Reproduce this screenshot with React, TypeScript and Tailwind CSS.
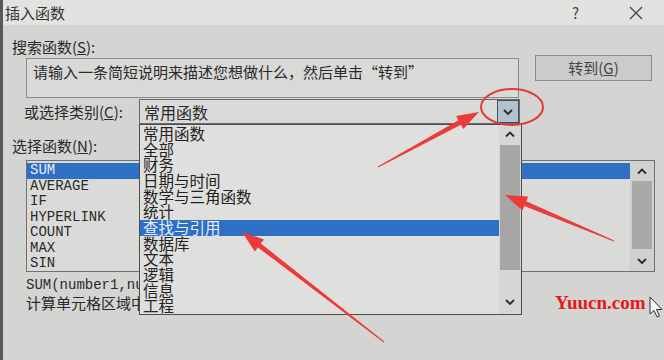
import React from "react";

const CJK = '"Noto Sans CJK SC", "Noto Sans", sans-serif';
const MONO = '"Liberation Mono", "Noto Sans CJK SC", monospace';

function arrowPoints(x1: number, y1: number, x2: number, y2: number, headL = 22, headW = 15, tailW = 1, neckW = 5) {
  const dx = x2 - x1, dy = y2 - y1;
  const len = Math.hypot(dx, dy);
  const ux = dx / len, uy = dy / len;
  const nx = -uy, ny = ux;
  const bx = x2 - ux * headL, by = y2 - uy * headL;
  const p = (x: number, y: number) => `${x.toFixed(1)},${y.toFixed(1)}`;
  return [
    p(x1 + nx * tailW / 2, y1 + ny * tailW / 2),
    p(bx + nx * neckW / 2, by + ny * neckW / 2),
    p(bx + nx * headW / 2, by + ny * headW / 2),
    p(x2, y2),
    p(bx - nx * headW / 2, by - ny * headW / 2),
    p(bx - nx * neckW / 2, by - ny * neckW / 2),
    p(x1 - nx * tailW / 2, y1 - ny * tailW / 2),
  ].join(" ");
}

const Chevron = ({ up = false, className = "" }: { up?: boolean; className?: string }) => (
  <svg width="12" height="8" viewBox="0 0 12 8" className={className}>
    <polyline
      points={up ? "2,6.5 6,2.5 10,6.5" : "2,2 6,6 10,2"}
      fill="none"
      stroke="#2a2a2a"
      strokeWidth="1.8"
    />
  </svg>
);

const categories = ["常用函数", "全部", "财务", "日期与时间", "数学与三角函数", "统计", "查找与引用", "数据库", "文本", "逻辑", "信息", "工程"];
const funcs = ["SUM", "AVERAGE", "IF", "HYPERLINK", "COUNT", "MAX", "SIN"];

export default function App() {
  return (
    <div className="relative w-[664px] h-[360px] overflow-hidden bg-[#d4d4d2] text-[#2a2a2a]" style={{ fontFamily: CJK }}>
      <div className="flex flex-col w-full h-full border-l-[3px] border-[#595959]">
        {/* title bar */}
        <div className="h-[25px] flex items-center bg-[#e2e2e0] pl-[2px] shrink-0">
          <span className="text-[15px] leading-[20px] text-[#333]">插入函数</span>
          <span className="ml-auto mr-[50px] text-[15px] leading-[20px] text-[#444]">?</span>
          <svg width="14" height="14" viewBox="0 0 14 14" className="mr-[21px]">
            <path d="M1 1 L13 13 M13 1 L1 13" stroke="#444" strokeWidth="1.3" fill="none" />
          </svg>
        </div>

        <div className="flex flex-col pl-[9px]">
          <div className="mt-[13px] h-[17px] text-[15px] leading-[17px]">
            搜索函数(<span className="underline">S</span>):
          </div>
          <div className="flex items-start">
            <div className="ml-[14px] mt-[3px] w-[493px] h-[40px] border border-[#8c8c8c] bg-[#d9d9d7] pl-[6px] pt-[3px] text-[15px] leading-[20px]">
              请输入一条简短说明来描述您想做什么，然后单击“转到”
            </div>
            <div className="ml-[16px] w-[117px] h-[26px] border border-[#8a8a8a] bg-[#cbcbc9] flex items-center justify-center text-[15px] leading-[20px] text-[#444]">
              转到(<span className="underline">G</span>)
            </div>
          </div>

          <div className="flex items-center mt-[1px] h-[25px]">
            <span className="ml-[12px] w-[115px] text-[15px] leading-[20px]">
              或选择类别(<span className="underline">C</span>):
            </span>
            <div className="w-[381px] h-[25px] border border-[#6a6a6a] bg-[#dadad8] flex items-center">
              <span className="pl-[4px] text-[16px] leading-[20px]">常用函数</span>
              <div className="ml-auto w-[22px] h-full bg-[#b3c1cf] border border-[#3f4f62] flex items-center justify-center">
                <Chevron />
              </div>
            </div>
          </div>

          <div className="mt-[12px] h-[20px] text-[15px] leading-[20px]">
            选择函数(<span className="underline">N</span>):
          </div>

          <div className="ml-[14px] mt-[4px] w-[629px] h-[112px] border border-[#707070] bg-[#dadad8] flex">
            <div className="flex-1 flex flex-col pt-[2px]" style={{ fontFamily: MONO }}>
              {funcs.map((f, i) => (
                <div
                  key={f}
                  className={
                    "h-[15.5px] leading-[15.5px] text-[14px] pl-[3px] " +
                    (i === 0 ? "bg-[#2f6fc4] text-[#e8eef8]" : "text-[#2a2a2a]")
                  }
                >
                  {f}
                </div>
              ))}
            </div>
            <div className="w-[24px] h-full bg-[#d0d0ce] flex flex-col items-center">
              <Chevron up className="mt-[6px]" />
              <div className="mt-[6px] w-[20px] h-[68px] bg-[#a9a9a7]" />
              <Chevron className="mt-[8px]" />
            </div>
          </div>

          <div className="ml-[14px] mt-[5px] h-[17px] text-[14px] leading-[17px] whitespace-nowrap" style={{ fontFamily: MONO }}>
            SUM(number1,number2,...)
          </div>
          <div className="ml-[14px] h-[18px] text-[15px] leading-[18px] whitespace-nowrap">
            计算单元格区域中所有数值的和
          </div>
        </div>
      </div>

      {/* open dropdown list */}
      <div className="absolute left-[139px] top-[124px] w-[383px] h-[191px] border border-[#4d4d4d] bg-[#dfdfdd] flex">
        <div className="flex-1 flex flex-col pt-[1px]">
          {categories.map((c, i) => (
            <div
              key={c}
              className={
                "h-[15.67px] leading-[15.67px] text-[15.5px] pl-[3px] whitespace-nowrap " +
                (i === 6 ? "bg-[#2f6fc4] text-[#e8eef8]" : "text-[#222]")
              }
            >
              {c}
            </div>
          ))}
        </div>
        <div className="w-[22px] h-full bg-[#d6d6d4] flex flex-col items-center">
          <Chevron up className="mt-[5px]" />
          <div className="mt-[7px] w-[20px] h-[125px] bg-[#a6a6a4]" />
          <div className="flex-1" />
          <Chevron className="mb-[8px]" />
        </div>
      </div>

      {/* watermark */}
      <div
        className="absolute left-[555px] top-[292px] text-[19px] leading-[22px] font-bold text-[#e21a1a]"
        style={{ fontFamily: '"Liberation Serif", serif' }}
      >
        Yuucn.com
      </div>

      {/* annotations */}
      <svg className="absolute left-0 top-0 pointer-events-none" width="664" height="360" viewBox="0 0 664 360">
        <ellipse cx="512" cy="107" rx="31" ry="18" fill="none" stroke="#e23a3a" strokeWidth="2" />
        <polygon points={arrowPoints(378, 167, 479, 112)} fill="#ec3b3b" />
        <polygon points={arrowPoints(614, 241, 505, 195)} fill="#ec3b3b" />
        <polygon points={arrowPoints(384, 342, 242, 232)} fill="#ec3b3b" />
        {/* mouse cursor */}
        <path
          d="M650 297 L650 314 L654 310.5 L657 317 L659.5 316 L656.5 309.5 L662 309.5 Z"
          fill="#f4f4f4"
          stroke="#333"
          strokeWidth="1"
        />
      </svg>
    </div>
  );
}
